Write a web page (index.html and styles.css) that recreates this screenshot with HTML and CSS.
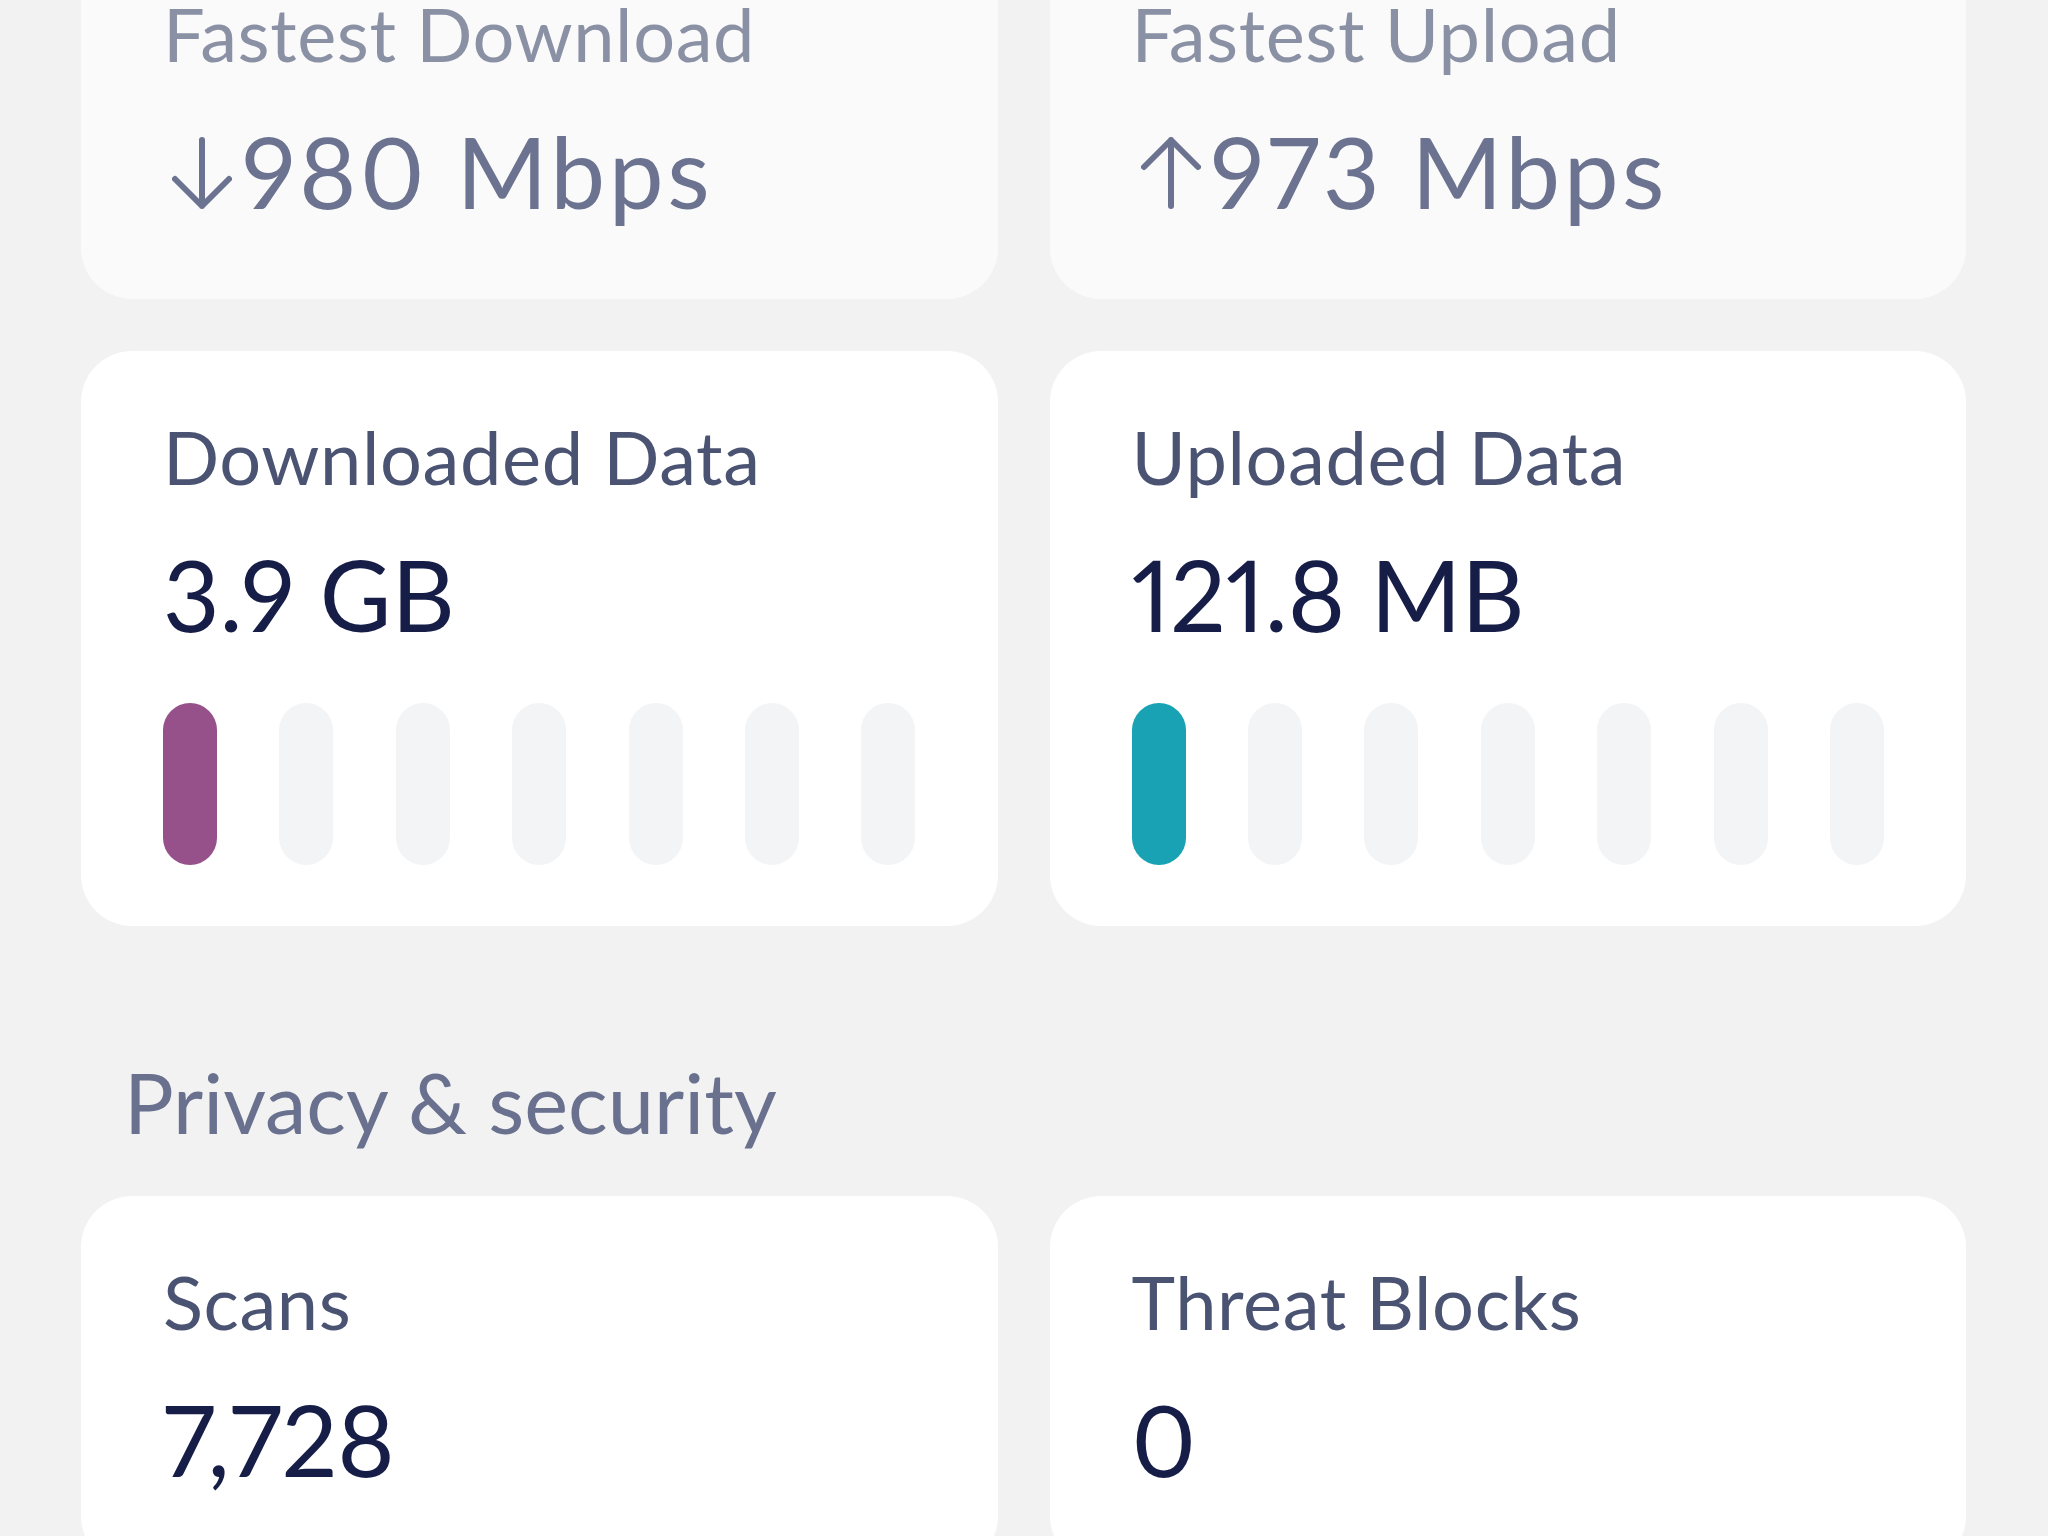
FILE: index.html
```html
<!DOCTYPE html>
<html lang="en">
<head>
<meta charset="utf-8">
<title>Stats</title>
<link rel="stylesheet" href="styles.css">
</head>
<body>
<main class="page">
  <section class="grid grid-top">
    <div class="card card-faded">
      <div class="label">Fastest Download</div>
      <div class="value"><svg class="arrow" viewBox="0 0 60 72" aria-hidden="true"><path d="M30 3 V69 M3 42 L30 69 L57 42" fill="none" stroke="currentColor" stroke-width="6" stroke-linecap="round" stroke-linejoin="round"/></svg>980 Mbps</div>
    </div>
    <div class="card card-faded">
      <div class="label">Fastest Upload</div>
      <div class="value"><svg class="arrow" viewBox="0 0 60 72" aria-hidden="true"><path d="M30 69 V3 M3 30 L30 3 L57 30" fill="none" stroke="currentColor" stroke-width="6" stroke-linecap="round" stroke-linejoin="round"/></svg>973 Mbps</div>
    </div>
  </section>

  <section class="grid grid-data">
    <div class="card">
      <div class="label">Downloaded Data</div>
      <div class="value">3.9 GB</div>
      <div class="bars">
        <span class="bar bar-download"></span>
        <span class="bar"></span>
        <span class="bar"></span>
        <span class="bar"></span>
        <span class="bar"></span>
        <span class="bar"></span>
        <span class="bar"></span>
      </div>
    </div>
    <div class="card">
      <div class="label">Uploaded Data</div>
      <div class="value">121.8 MB</div>
      <div class="bars">
        <span class="bar bar-upload"></span>
        <span class="bar"></span>
        <span class="bar"></span>
        <span class="bar"></span>
        <span class="bar"></span>
        <span class="bar"></span>
        <span class="bar"></span>
      </div>
    </div>
  </section>

  <h2 class="section-title">Privacy &amp; security</h2>

  <section class="grid grid-security">
    <div class="card">
      <div class="label">Scans</div>
      <div class="value">7,728</div>
    </div>
    <div class="card">
      <div class="label">Threat Blocks</div>
      <div class="value">0</div>
    </div>
  </section>
</main>
</body>
</html>
```

FILE: styles.css
```css
html, body {
  margin: 0;
  padding: 0;
}

body {
  background: #f2f2f2;
  font-family: "Lato", "Noto Sans", sans-serif;
  overflow: hidden;
  height: 1536px;
}

.page {
  padding: 0 82px 0 81px;
  margin-top: -72px;
}

.grid {
  display: grid;
  grid-template-columns: 1fr 1fr;
  column-gap: 52px;
}

.grid-data {
  margin-top: 52px;
}

.card {
  background: #ffffff;
  border-radius: 51px;
  padding: 61px 82px 73px 82px;
}

.grid-data .card {
  padding-bottom: 61px;
}

.label {
  font-size: 74px;
  line-height: 90px;
  letter-spacing: 0.6px;
  color: #4b5373;
  white-space: nowrap;
}

.value {
  font-size: 98px;
  line-height: 110px;
  margin-top: 37px;
  color: #161d47;
  white-space: nowrap;
  font-variant-numeric: proportional-nums;
}

.card-faded {
  background: #fafafa;
  padding-top: 73px;
}

.card-faded .label {
  color: #8b91a4;
  line-height: 66px;
}

.card-faded .value {
  color: #6c7390;
  letter-spacing: 3.5px;
  margin-top: 49px;
}

.arrow {
  width: 60px;
  height: 72px;
  vertical-align: baseline;
  margin-left: 9px;
  margin-right: 10px;
}

.bars {
  display: flex;
  justify-content: space-between;
  margin-top: 54px;
}

.bar {
  width: 54px;
  height: 162px;
  border-radius: 27px;
  background: #f3f4f6;
}

.bar-download {
  background: #96508a;
}

.bar-upload {
  background: #18a2b3;
}

.section-title {
  margin: 126px 0 44px 43px;
  font-size: 83px;
  line-height: 100px;
  font-weight: 400;
  color: #69718f;
}
```
